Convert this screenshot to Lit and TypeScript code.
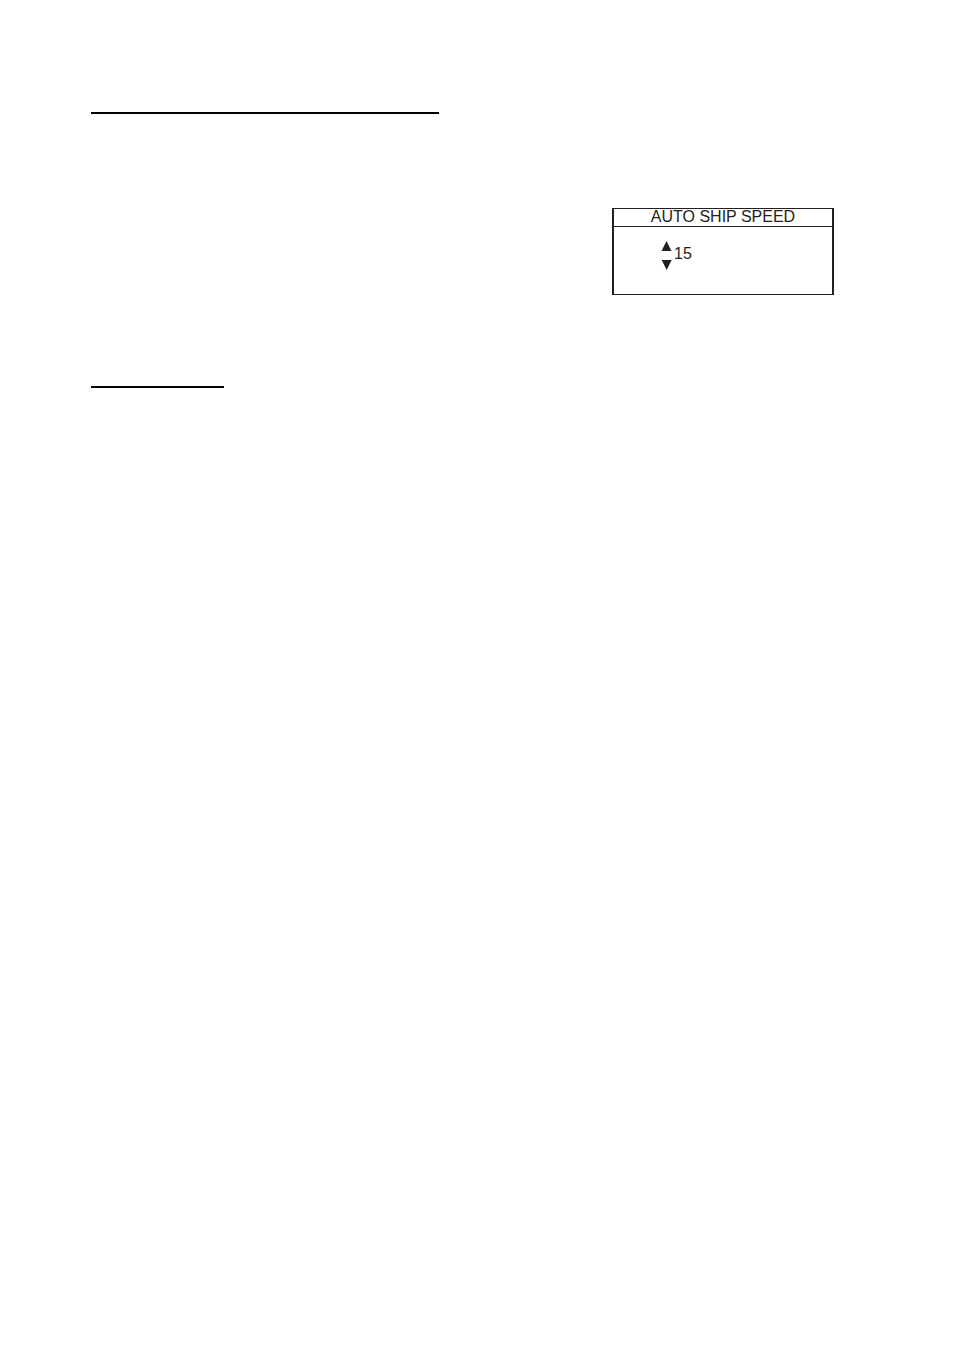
import { LitElement, html, css } from "lit";
import { customElement, state } from "lit/decorators.js";

@customElement("speed-panel")
class SpeedPanel extends LitElement {
  @state() private speed = 15;

  static styles = css`
    :host {
      display: block;
      box-sizing: border-box;
      width: 222px;
      border: solid #231f20;
      border-width: 1px 2px;
      color: #231f20;
      font: 16px/16px "Liberation Sans", Arial, sans-serif;
    }
    .title {
      display: block;
      padding-bottom: 1px;
      border-bottom: 1px solid #231f20;
      text-align: center;
    }
    .body {
      display: flex;
      align-items: flex-start;
      gap: 2px;
      padding: 14px 0 24px 47px;
    }
    .stepper {
      display: flex;
      flex-direction: column;
      gap: 9px;
    }
    .step {
      display: block;
      width: 11px;
      height: 10px;
      padding: 0;
      border: 0;
      background: none;
      color: inherit;
    }
    .arrow {
      display: block;
      width: 11px;
      height: 10px;
      fill: currentColor;
    }
    .value {
      width: 48px;
      height: 16px;
      margin: 5px 0 0;
      padding: 0;
      border: 0;
      outline: 0;
      background: none;
      color: inherit;
      font: inherit;
    }
  `;

  private change(step: number) {
    this.speed = Math.max(0, this.speed + step);
  }

  render() {
    return html`
      <label class="title" for="speed">AUTO SHIP SPEED</label>
      <div class="body">
        <div class="stepper">
          <button class="step" aria-label="Increase" @click=${() => this.change(1)}>
            <svg class="arrow" viewBox="0 0 11 10"><path d="M5.5 0 10.5 10H.5Z" /></svg>
          </button>
          <button class="step" aria-label="Decrease" @click=${() => this.change(-1)}>
            <svg class="arrow" viewBox="0 0 11 10"><path d="M.7 0H10.7L5.7 10Z" /></svg>
          </button>
        </div>
        <input class="value" id="speed" inputmode="numeric" .value=${String(this.speed)} />
      </div>
    `;
  }
}

@customElement("app-root")
class AppRoot extends LitElement {
  static styles = css`
    :host {
      display: block;
      box-sizing: border-box;
      min-height: 100vh;
      padding: 112px 120px 0 91px;
      background: #fff;
    }
    .rule {
      height: 2px;
      margin: 0;
      border: 0;
      background: #000;
    }
    .wide {
      width: 348px;
    }
    .short {
      width: 133px;
    }
    .figure {
      display: flex;
      justify-content: flex-end;
      padding: 94px 0 91px;
    }
  `;

  render() {
    return html`
      <hr class="rule wide" />
      <div class="figure"><speed-panel></speed-panel></div>
      <hr class="rule short" />
    `;
  }
}
